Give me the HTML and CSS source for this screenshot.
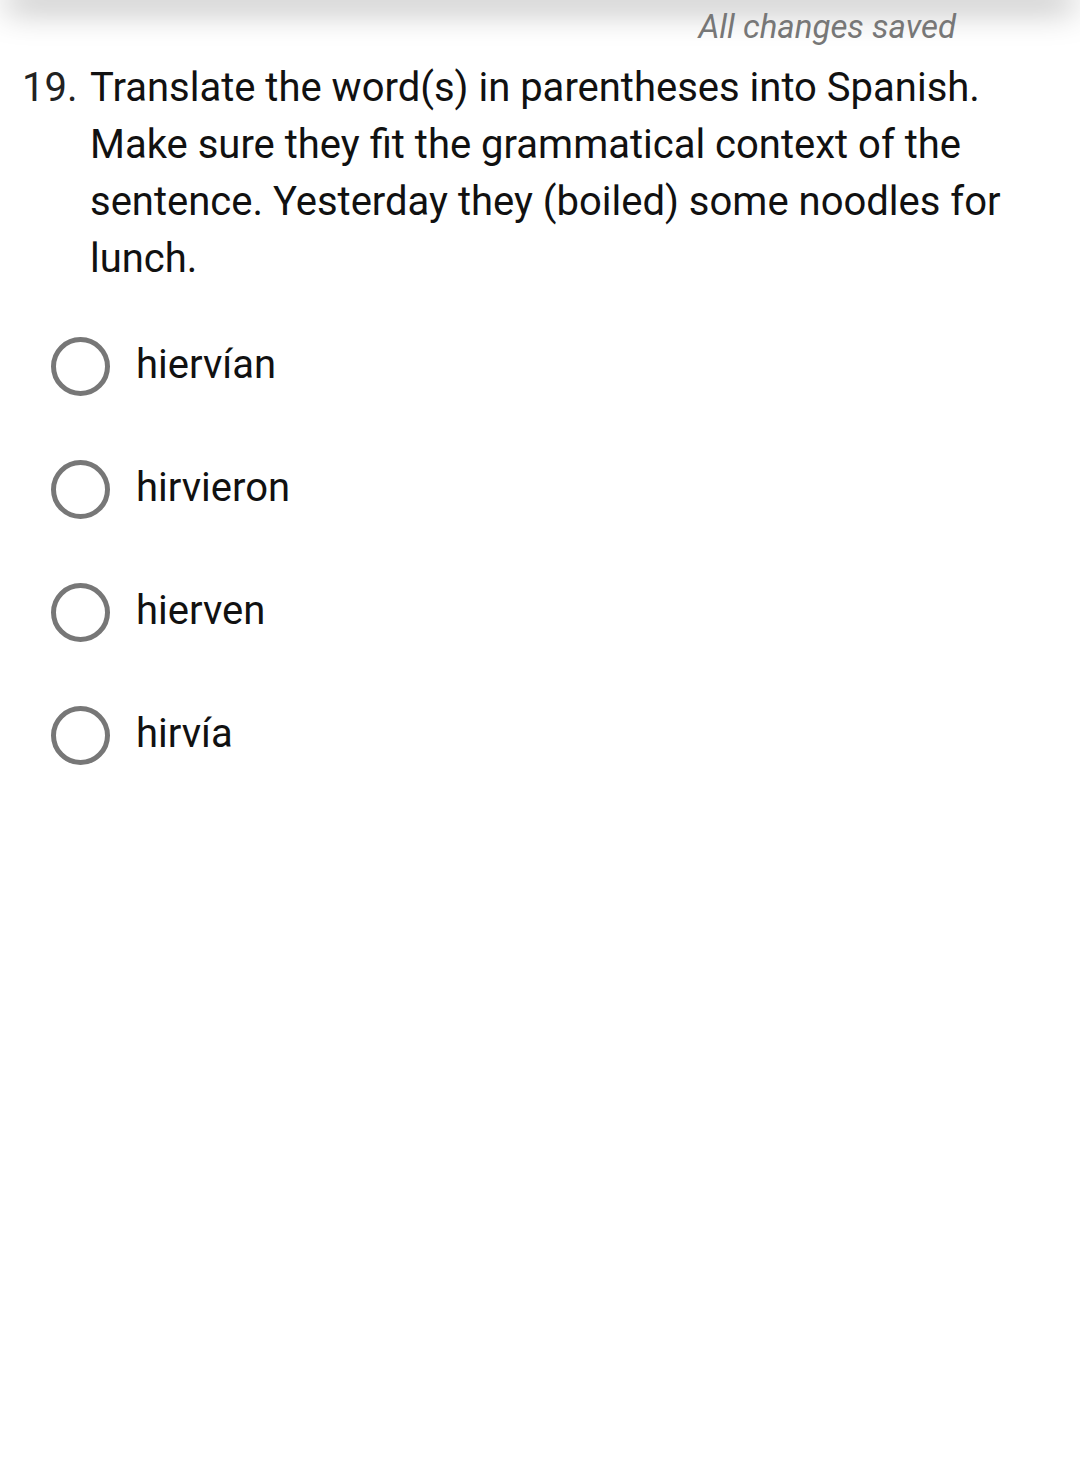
FILE: index.html
```html
<!DOCTYPE html>
<html lang="en">
<head>
    <meta charset="UTF-8">
    <meta name="viewport" content="width=device-width, initial-scale=1.0">
    <title>Quiz</title>
    <link rel="stylesheet" href="styles.css">
</head>
<body>
    <div class="topbar"></div>
    <div class="status">All changes saved</div>

    <div class="question">
        <span class="num">19.</span>
        <p class="prompt">Translate the word(s) in parentheses into Spanish. Make sure they fit the grammatical context of the sentence. Yesterday they (boiled) some noodles for lunch.</p>
    </div>

    <ul class="options">
        <li><span class="radio"></span><span class="label">hiervían</span></li>
        <li><span class="radio"></span><span class="label">hirvieron</span></li>
        <li><span class="radio"></span><span class="label">hierven</span></li>
        <li><span class="radio"></span><span class="label">hirvía</span></li>
    </ul>
</body>
</html>
```

FILE: styles.css
```css
body {
    font-family: Roboto, "Noto Sans", sans-serif;
    background-color: #fff;
    margin: 0;
    padding: 0;
    color: #111;
    overflow: hidden;
}

/* shadow of the toolbar that sits just above this view */
.topbar {
    height: 0;
    margin: 0 14px;
    box-shadow: 0 0 34px 8px rgba(0, 0, 0, 0.38);
}

.status {
    text-align: right;
    padding-right: 124px;
    font-style: italic;
    font-size: 33px;
    line-height: 40px;
    padding-top: 7px;
    color: #777;
}

.question {
    display: flex;
    margin: 12px 0 0 22px;
    padding-right: 50px;
    font-size: 40px;
    line-height: 57px;
}

.num {
    width: 68px;
    flex-shrink: 0;
    color: #222;
}

.prompt {
    margin: 0;
}

.options {
    list-style: none;
    margin: 18px 0 0 0;
    padding: 0 0 0 51px;
}

.options li {
    display: flex;
    align-items: center;
    height: 123px;
    font-size: 40px;
}

.radio {
    width: 49px;
    height: 49px;
    border: 5px solid #777;
    border-radius: 50%;
    flex-shrink: 0;
    margin-right: 26px;
}

.label {
    margin-top: -4px;
}
```
